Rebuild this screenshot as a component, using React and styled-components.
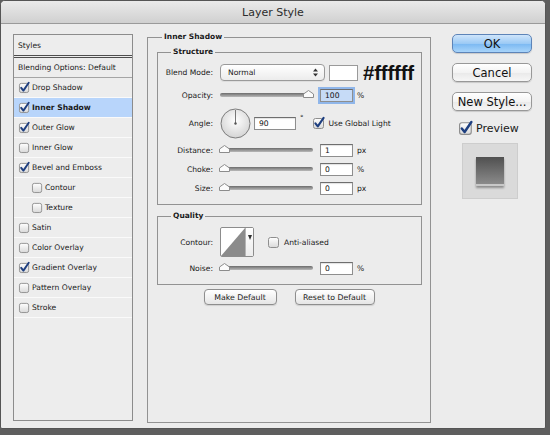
import React from "react";
import styled, { createGlobalStyle } from "styled-components";

const GlobalStyle = createGlobalStyle`
  html, body {
    margin: 0;
    padding: 0;
  }
  body {
    background: #5e5e5e;
    font-family: "DejaVu Sans", Verdana, sans-serif;
    color: #1a1a1a;
  }
`;

// Window frame
const Window = styled.div`
  width: 546px;
  height: 429px;
  box-sizing: border-box;
  border: 1px solid #555;
  border-radius: 5px 5px 2px 2px;
  background: #ececec;
  overflow: hidden;
  display: flex;
  flex-direction: column;
`;

const TitleBar = styled.div`
  height: 22px;
  flex-shrink: 0;
  display: flex;
  align-items: center;
  justify-content: center;
  background: linear-gradient(#eaeaea, #d0d0d0);
  border-bottom: 1px solid #9a9a9a;
  font-size: 11px;
  color: #2c2c2c;
`;

const Body = styled.div`
  display: flex;
  align-items: flex-start;
  padding: 10px 0 0 12px;
`;

// Left styles list
const StylesPanel = styled.div`
  width: 120px;
  height: 387px;
  box-sizing: border-box;
  border: 1px solid #8c8c8c;
  margin-right: 14px;
  background: #ededed;
  font-size: 7.6px;
`;

const PanelHeader = styled.div`
  height: 20px;
  display: flex;
  align-items: center;
  padding-left: 4px;
  border-bottom: 3px double #4e4e4e;
`;

const BlendingRow = styled.div`
  height: 20px;
  box-sizing: border-box;
  display: flex;
  align-items: center;
  padding-left: 4px;
  border-bottom: 1px solid #a5a5a5;
`;

const StyleRow = styled.div`
  height: 20px;
  box-sizing: border-box;
  display: flex;
  align-items: center;
  padding-left: ${(p) => (p.$sub ? 18 : 5)}px;
  border-bottom: 1px solid #fafafa;
  background: ${(p) => (p.$active ? "#b8d5fb" : "transparent")};
  font-weight: ${(p) => (p.$active ? "bold" : "normal")};
`;

const CheckSvg = styled.svg`
  flex-shrink: 0;
  margin-right: ${(p) => p.$mr}px;
  overflow: visible;
`;

const CheckBox = ({ checked, size = 11, mr = 2 }) => (
  <CheckSvg width={size} height={size} viewBox="0 0 12 12" $mr={mr}>
    <defs>
      <linearGradient id="cbFill" x1="0" y1="0" x2="0" y2="1">
        <stop offset="0" stopColor="#ffffff" />
        <stop offset="1" stopColor="#d9d9d9" />
      </linearGradient>
    </defs>
    <rect x="0.5" y="1.5" width="10" height="10" rx="2" fill="url(#cbFill)" stroke="#8e8e8e" />
    {checked && (
      <path
        d="M2.4 6.4 L4.8 9.4 L10.6 0.9"
        fill="none"
        stroke="#1e3f80"
        strokeWidth="2.1"
        strokeLinecap="round"
        strokeLinejoin="round"
      />
    )}
  </CheckSvg>
);

// Middle group boxes
const Group = styled.fieldset`
  margin: ${(p) => p.$m};
  padding: 0;
  border: 1px solid #929292;
  min-width: 0;
  box-sizing: border-box;
  height: ${(p) => (p.$h ? `${p.$h}px` : "auto")};
  font-size: 7.6px;
`;

const Legend = styled.legend`
  font-size: 7.5px;
  line-height: 10px;
  font-weight: bold;
  padding: 0 2px;
  margin-left: ${(p) => p.$ml}px;
`;

const MainColumn = styled.div`
  width: 284px;
  margin-top: -2px;
`;

const GroupContent = styled.div`
  padding: ${(p) => p.$pad};
`;

const Row = styled.div`
  display: flex;
  align-items: center;
  height: ${(p) => p.$h}px;
  margin-top: ${(p) => p.$mt || 0}px;
`;

const Label = styled.div`
  width: 55px;
  flex-shrink: 0;
  text-align: right;
  margin-right: 7px;
`;

const Select = styled.div`
  width: 105px;
  height: 17px;
  box-sizing: border-box;
  border: 1px solid #9a9a9a;
  border-radius: 4px;
  background: linear-gradient(#ffffff, #ececec);
  display: flex;
  align-items: center;
  justify-content: space-between;
  padding: 0 6px 0 7px;
  box-shadow: 0 1px 0 rgba(0, 0, 0, 0.06);
`;

const Swatch = styled.div`
  width: 29px;
  height: 16px;
  box-sizing: border-box;
  border: 1px solid #9a9a9a;
  background: #fff;
  margin-left: 4px;
`;

const HexText = styled.div`
  font-family: "Liberation Sans", Arial, sans-serif;
  font-weight: bold;
  font-size: 20.5px;
  color: #111;
  margin-left: 5px;
  letter-spacing: -0.2px;
`;

const SliderWrap = styled.div`
  position: relative;
  width: 93px;
  height: 14px;
  display: flex;
  align-items: center;
  flex-shrink: 0;
`;

const Track = styled.div`
  width: 100%;
  height: 4px;
  border-radius: 2px;
  background: linear-gradient(#6c6c6c, #b9b9b9);
`;

const KnobSvg = styled.svg`
  position: absolute;
  top: 2px;
`;

const Slider = ({ value }) => (
  <SliderWrap>
    <Track />
    <KnobSvg width="11" height="8" viewBox="0 0 11 8" style={{ left: `${(value / 100) * 84 - 1}px` }}>
      <path d="M0.5 7.5 V4 L5.5 0.5 L10.5 4 V7.5 Z" fill="#fbfbfb" stroke="#8c8c8c" />
    </KnobSvg>
  </SliderWrap>
);

const Field = styled.input`
  width: ${(p) => p.$w || 33}px;
  height: 13px;
  box-sizing: border-box;
  margin: 0 0 0 ${(p) => p.$ml ?? 7}px;
  padding: 0 0 0 4px;
  border: 1px solid #8e8e8e;
  border-top-color: #6e6e6e;
  background: ${(p) => (p.$focus ? "#c6dbf7" : "#fff")};
  box-shadow: ${(p) => (p.$focus ? "0 0 0 2px #8fb6ea" : "inset 0 1px 1px rgba(0,0,0,0.12)")};
  font-family: "DejaVu Sans", sans-serif;
  font-size: 7.6px;
  color: #111;
  outline: none;
`;

const Unit = styled.span`
  margin-left: 4px;
`;

const Degree = styled.span`
  align-self: flex-start;
  margin: 6px 0 0 4px;
  font-size: 7px;
`;

const CheckLabel = styled.div`
  display: flex;
  align-items: center;
  margin-left: ${(p) => p.$ml}px;
`;

const ContourBox = styled.div`
  width: 34px;
  height: 30px;
  box-sizing: border-box;
  border: 1px solid #8c8c8c;
  border-radius: 2px;
  background: #fff;
  display: flex;
  flex-shrink: 0;
`;

const ContourArrow = styled.div`
  width: 8px;
  border-left: 1px solid #b5b5b5;
  background: linear-gradient(#ffffff, #ececec);
  display: flex;
  justify-content: center;
  padding-top: 7px;
  box-sizing: border-box;
`;

const ButtonRow = styled.div`
  display: flex;
  justify-content: center;
  gap: 18px;
  margin-top: 4px;
`;

const SmallButton = styled.button`
  width: ${(p) => p.$w}px;
  height: 16px;
  padding: 0;
  border: 1px solid #8e8e8e;
  border-radius: 4px;
  background: linear-gradient(#ffffff, #e6e6e6);
  font-family: "DejaVu Sans", sans-serif;
  font-size: 7.8px;
  color: #1a1a1a;
  box-shadow: 0 1px 1px rgba(0, 0, 0, 0.12);
`;

// Right column
const SideColumn = styled.div`
  width: 80px;
  margin-left: 21px;
  display: flex;
  flex-direction: column;
`;

const DialogButton = styled.button`
  width: 80px;
  height: 19px;
  padding: 0;
  margin-top: ${(p) => p.$mt || 0}px;
  border: 1px solid ${(p) => (p.$primary ? "#5d84b8" : "#989898")};
  border-radius: 5px;
  background: ${(p) =>
    p.$primary
      ? "linear-gradient(#cfe5fb 0%, #9ccaf5 50%, #7ab8f2 51%, #a8d4fa 100%)"
      : "linear-gradient(#ffffff 0%, #f3f3f3 50%, #e9e9e9 51%, #f6f6f6 100%)"};
  font-family: "DejaVu Sans", sans-serif;
  font-size: 11.5px;
  color: #111;
  box-shadow: 0 1px 1px rgba(0, 0, 0, 0.15);
`;

const PreviewRow = styled.div`
  display: flex;
  align-items: center;
  margin: 10px 0 0 7px;
  font-size: 11px;
`;

const PreviewBox = styled.div`
  width: 56px;
  height: 56px;
  margin: 8px 0 0 10px;
  box-sizing: border-box;
  border: 1px solid #cdcdcd;
  background: #dadada;
  display: flex;
  align-items: center;
  justify-content: center;
`;

const PreviewSquare = styled.div`
  width: 28px;
  height: 27px;
  background: linear-gradient(#505050, #8a8a8a);
  border-bottom: 2px solid #c8c8c8;
  box-shadow: 0 2px 2px rgba(0, 0, 0, 0.35);
`;

const styleItems = [
  { name: "Drop Shadow", checked: true },
  { name: "Inner Shadow", checked: true, active: true },
  { name: "Outer Glow", checked: true },
  { name: "Inner Glow" },
  { name: "Bevel and Emboss", checked: true },
  { name: "Contour", sub: true },
  { name: "Texture", sub: true },
  { name: "Satin" },
  { name: "Color Overlay" },
  { name: "Gradient Overlay", checked: true },
  { name: "Pattern Overlay" },
  { name: "Stroke" },
];

const SelectArrows = () => (
  <svg width="5" height="9" viewBox="0 0 5 9">
    <path d="M0 3.5 L2.5 0.5 L5 3.5 Z M0 5.5 L2.5 8.5 L5 5.5 Z" fill="#333" />
  </svg>
);

const AngleDial = () => (
  <svg width="31" height="31" viewBox="0 0 31 31" style={{ flexShrink: 0 }}>
    <defs>
      <radialGradient id="dialFill" cx="0.5" cy="0.4" r="0.6">
        <stop offset="0" stopColor="#ffffff" />
        <stop offset="1" stopColor="#d4d4d4" />
      </radialGradient>
    </defs>
    <circle cx="15.5" cy="15.5" r="14.5" fill="url(#dialFill)" stroke="#7c7c7c" />
    <line x1="15.5" y1="15.5" x2="15.5" y2="2" stroke="#777" strokeWidth="1" />
    <circle cx="15.5" cy="15.5" r="1.2" fill="#555" />
  </svg>
);

const App = () => {
  return (
    <>
      <GlobalStyle />
      <Window>
        <TitleBar>Layer Style</TitleBar>
        <Body>
          <StylesPanel>
            <PanelHeader>Styles</PanelHeader>
            <BlendingRow>Blending Options: Default</BlendingRow>
            {styleItems.map((item) => (
              <StyleRow key={item.name} $sub={item.sub} $active={item.active}>
                <CheckBox checked={item.checked} />
                {item.name}
              </StyleRow>
            ))}
          </StylesPanel>

          <MainColumn>
            <Group $m="0" $h={391}>
              <Legend $ml={14}>Inner Shadow</Legend>

              <Group $m="5px 8px 0 9px">
                <Legend $ml={13}>Structure</Legend>
                <GroupContent $pad="7px 0 9px 0">
                  <Row $h={17}>
                    <Label>Blend Mode:</Label>
                    <Select>
                      <span>Normal</span>
                      <SelectArrows />
                    </Select>
                    <Swatch />
                    <HexText>#ffffff</HexText>
                  </Row>
                  <Row $h={14} $mt={7}>
                    <Label>Opacity:</Label>
                    <Slider value={100} />
                    <Field $focus defaultValue="100" />
                    <Unit>%</Unit>
                  </Row>
                  <Row $h={30} $mt={6}>
                    <Label>Angle:</Label>
                    <AngleDial />
                    <Field $w={42} $ml={3} defaultValue="90" />
                    <Degree>°</Degree>
                    <CheckLabel $ml={9}>
                      <CheckBox checked size={12} mr={4} />
                      Use Global Light
                    </CheckLabel>
                  </Row>
                  <Row $h={14} $mt={5}>
                    <Label>Distance:</Label>
                    <Slider value={0} />
                    <Field defaultValue="1" />
                    <Unit>px</Unit>
                  </Row>
                  <Row $h={14} $mt={5}>
                    <Label>Choke:</Label>
                    <Slider value={0} />
                    <Field defaultValue="0" />
                    <Unit>%</Unit>
                  </Row>
                  <Row $h={14} $mt={5}>
                    <Label>Size:</Label>
                    <Slider value={0} />
                    <Field defaultValue="0" />
                    <Unit>px</Unit>
                  </Row>
                </GroupContent>
              </Group>

              <Group $m="6px 8px 0 9px">
                <Legend $ml={13}>Quality</Legend>
                <GroupContent $pad="6px 0 9px 0">
                  <Row $h={30}>
                    <Label>Contour:</Label>
                    <ContourBox>
                      <svg width="24" height="28" viewBox="0 0 24 28">
                        <polygon points="0,28 24,0 24,28" fill="#8b8b8b" />
                      </svg>
                      <ContourArrow>
                        <svg width="4" height="5" viewBox="0 0 4 5">
                          <path d="M0 0 H4 L2 5 Z" fill="#333" />
                        </svg>
                      </ContourArrow>
                    </ContourBox>
                    <CheckLabel $ml={14}>
                      <CheckBox size={12} mr={4} />
                      Anti-aliased
                    </CheckLabel>
                  </Row>
                  <Row $h={14} $mt={4}>
                    <Label>Noise:</Label>
                    <Slider value={0} />
                    <Field defaultValue="0" />
                    <Unit>%</Unit>
                  </Row>
                </GroupContent>
              </Group>

              <ButtonRow>
                <SmallButton $w={73}>Make Default</SmallButton>
                <SmallButton $w={80}>Reset to Default</SmallButton>
              </ButtonRow>
            </Group>
          </MainColumn>

          <SideColumn>
            <DialogButton $primary>OK</DialogButton>
            <DialogButton $mt={10}>Cancel</DialogButton>
            <DialogButton $mt={10}>New Style...</DialogButton>
            <PreviewRow>
              <CheckBox checked size={14} mr={3} />
              Preview
            </PreviewRow>
            <PreviewBox>
              <PreviewSquare />
            </PreviewBox>
          </SideColumn>
        </Body>
      </Window>
    </>
  );
};

export default App;
